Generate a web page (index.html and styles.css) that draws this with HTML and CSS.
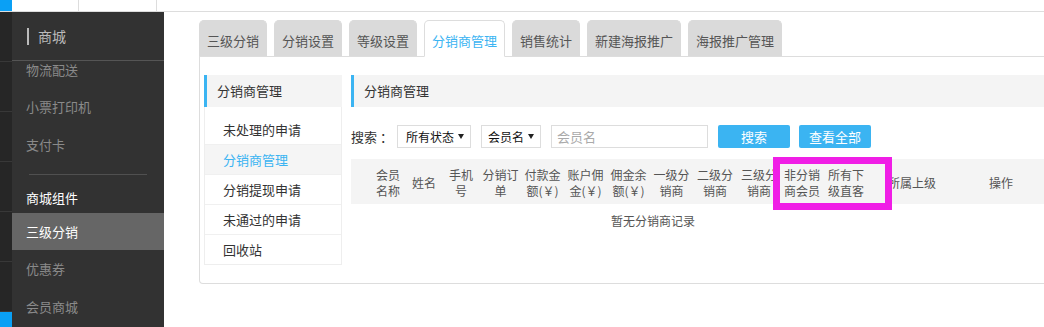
FILE: index.html
```html
<!DOCTYPE html>
<html lang="zh-CN">
    <head>
        <title>三级分销 - 分销商管理</title>
        <meta charset="UTF-8">
        <meta name="viewport" content="width=device-width, initial-scale=1">
        <link rel="stylesheet" href="styles.css">
    </head>
    <body>

        <header class="topbar">
            <span class="topbar-dot"></span>
            <span class="topbar-cell"></span>
            <span class="topbar-cell wide"></span>
        </header>

        <div class="layout">
            <div class="rail">
                <span></span>
                <span></span>
                <span></span>
                <span></span>
                <span></span>
                <span></span>
                <span class="rail-active"></span>
            </div>

            <aside class="sidebar">
                <div class="side-head"><i></i>商城</div>
                <div class="side-scroll">
                    <ul class="side-menu">
                        <li class="first">物流配送</li>
                        <li>小票打印机</li>
                        <li>支付卡</li>
                        <li class="side-sep"></li>
                        <li class="side-title">商城组件</li>
                        <li class="active">三级分销</li>
                        <li>优惠券</li>
                        <li>会员商城</li>
                    </ul>
                </div>
            </aside>

            <main class="main">
                <ul class="tabs">
                    <li>三级分销</li>
                    <li>分销设置</li>
                    <li>等级设置</li>
                    <li class="active">分销商管理</li>
                    <li>销售统计</li>
                    <li>新建海报推广</li>
                    <li>海报推广管理</li>
                </ul>

                <div class="panel">
                    <div class="subnav">
                        <div class="box-title">分销商管理</div>
                        <ul class="subnav-list">
                            <li>未处理的申请</li>
                            <li class="active">分销商管理</li>
                            <li>分销提现申请</li>
                            <li>未通过的申请</li>
                            <li>回收站</li>
                        </ul>
                    </div>

                    <div class="content">
                        <div class="box-title">分销商管理</div>

                        <form class="search">
                            <span class="search-label">搜索 ：</span>
                            <div class="select status">所有状态<span class="caret"></span></div>
                            <div class="select field">会员名<span class="caret"></span></div>
                            <input type="text" placeholder="会员名">
                            <button type="button">搜索</button>
                            <button type="button">查看全部</button>
                        </form>

                        <div class="thead">
                            <span></span>
                            <span>会员<br>名称</span>
                            <span>姓名</span>
                            <span>手机<br>号</span>
                            <span>分销订<br>单</span>
                            <span>付款金<br>额(￥)</span>
                            <span>账户佣<br>金(￥)</span>
                            <span>佣金余<br>额(￥)</span>
                            <span>一级分<br>销商</span>
                            <span>二级分<br>销商</span>
                            <span>三级分<br>销商</span>
                            <span>非分销<br>商会员</span>
                            <span>所有下<br>级直客</span>
                            <span>所属上级</span>
                            <span>操作</span>
                            <!-- annotation frame -->
                            <div class="mark"></div>
                        </div>
                        <div class="empty">暂无分销商记录</div>
                    </div>
                </div>
            </main>
        </div>

    </body>
</html>
```

FILE: styles.css
```css
html, body {
    margin: 0;
    height: 100%;
    overflow: hidden;
}
body {
    font-family: "Noto Sans CJK SC", "Liberation Sans", sans-serif;
    font-size: 13px;
    color: #333;
    background: #fff;
}
ul {
    list-style: none;
    margin: 0;
    padding: 0;
}

/* top strip */
.topbar {
    display: flex;
    height: 11px;
    border-bottom: 1px solid #ddd;
}
.topbar-dot {
    width: 12px;
    background: #0aa0f5;
}
.topbar-cell {
    width: 66px;
    border-right: 1px solid #ddd;
}
.topbar-cell.wide {width: 77px;}

.layout {
    display: flex;
    height: calc(100% - 12px);
}

/* far left rail */
.rail {
    width: 12px;
    background: #262626;
    display: flex;
    flex-direction: column;
}
    .rail span {
        height: 49px;
        border-bottom: 1px solid #383838;
    }
    .rail .rail-active {
        flex: 1;
        height: auto;
        border: none;
        background: #0aa0f5;
    }

/* sidebar */
.sidebar {
    width: 152px;
    background: #323232;
    display: flex;
    flex-direction: column;
}
    .side-head {
        height: 48px;
        border-bottom: 1px solid #555;
        display: flex;
        align-items: center;
        padding-left: 15px;
        font-size: 14px;
        color: #bbb;
    }
        .side-head i {
            width: 2px;
            height: 17px;
            background: #bbb;
            margin-right: 9px;
        }
    .side-scroll {
        flex: 1;
        overflow: hidden;
    }
        .side-menu li {
            height: 38px;
            line-height: 38px;
            padding-left: 14px;
            color: #8a8a8a;
        }
        .side-menu .first {
            height: 27px;
            line-height: 17px;
        }
        .side-menu .side-sep {
            height: 1px;
            margin: 10px 17px 0;
            padding: 0;
            background: #505050;
        }
        .side-menu .side-title {
            height: 27px;
            line-height: 24px;
            padding-top: 11px;
            color: #fff;
        }
        .side-menu .active {
            height: 37px;
            line-height: 37px;
            background: #666;
            color: #fff;
        }

/* main area */
.main {
    flex: 1;
    min-width: 0;
    overflow: hidden;
    padding: 8px 0 0 35px;
}

.tabs {
    display: flex;
    gap: 7px;
    border-bottom: 1px solid #ddd;
}
    .tabs li {
        height: 31px;
        line-height: 31px;
        padding: 4px 7px 0;
        border: 1px solid #dadada;
        border-bottom: none;
        border-radius: 5px 5px 0 0;
        background: #dadada;
        color: #555;
        white-space: nowrap;
    }
    .tabs li.active {
        height: 31px;
        background: #fff;
        border-color: #ddd;
        border-bottom: 1px solid #fff;
        margin-bottom: -1px;
        color: #3bb4f2;
    }

.panel {
    width: 870px;
    display: flex;
    gap: 9px;
    padding: 18px 0 18px 4px;
    border: 1px solid #ddd;
    border-top: none;
    border-radius: 0 0 4px 4px;
}

.box-title {
    height: 32px;
    line-height: 32px;
    padding-left: 10px;
    background: #f4f4f4;
    border-left: 3px solid #3bb4f2;
    color: #333;
}

/* left sub navigation */
.subnav {
    width: 138px;
}
    .subnav-list {
        padding-top: 8px;
        border: 1px solid #eee;
        border-top: none;
    }
        .subnav-list li {
            height: 29px;
            line-height: 29px;
            padding-left: 18px;
            color: #333;
        }
        .subnav-list li + li {
            border-top: 1px solid #f0f0f0;
        }
        .subnav-list li.active {
            background: #f5f5f5;
            color: #3bb4f2;
        }

/* right content */
.content {
    flex: 1;
}

.search {
    display: flex;
    align-items: center;
    height: 23px;
    margin-top: 18px;
}
    .search-label {
        width: 46px;
        color: #333;
        white-space: nowrap;
    }
    .select {
        box-sizing: border-box;
        height: 23px;
        border: 1px solid #ddd;
        display: flex;
        align-items: center;
        justify-content: space-between;
        padding: 0 6px 0 8px;
        font-size: 12px;
        color: #111;
    }
    .select.status {width: 74px; margin-right: 10px;}
    .select.field {width: 60px; margin-right: 10px; padding-left: 6px;}
        .caret {
            width: 0;
            height: 0;
            border-left: 3px solid transparent;
            border-right: 3px solid transparent;
            border-top: 5px solid #222;
        }
    .search input {
        box-sizing: border-box;
        width: 157px;
        height: 23px;
        border: 1px solid #ddd;
        padding: 0 5px;
        margin: 0 10px 0 0;
        font: inherit;
        outline: none;
    }
    .search input::placeholder {color: #aaa;}
    .search button {
        width: 72px;
        height: 23px;
        margin: 0 9px 0 0;
        padding: 0;
        border: none;
        border-radius: 2px;
        background: #3bb4f2;
        color: #fff;
        font: inherit;
    }

.thead {
    position: relative;
    box-sizing: border-box;
    height: 45px;
    margin-top: 11px;
    padding-top: 3px;
    background: #f4f4f4;
    display: grid;
    grid-template-columns: 19px 36px 36px 38px 41px 43px 43px 43px 43px 44px 44px 42px 46px 86px 92px;
    align-items: center;
}
    .thead span {
        text-align: center;
        font-size: 12px;
        line-height: 16px;
        color: #555;
        white-space: nowrap;
    }
    .thead .mark {
        position: absolute;
        left: 422px;
        top: -2px;
        width: 119px;
        height: 53px;
        box-sizing: border-box;
        border: 7px solid #f01ee6;
    }

.empty {
    width: 604px;
    height: 34px;
    line-height: 34px;
    text-align: center;
    font-size: 12px;
    color: #555;
}
```
